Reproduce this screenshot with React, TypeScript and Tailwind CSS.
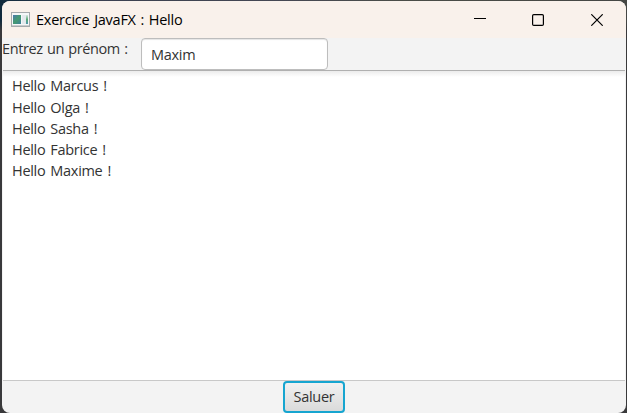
const greetings = ['Marcus', 'Olga', 'Sasha', 'Fabrice', 'Maxime'];

function AppIcon() {
  return (
    <svg width="19" height="15" viewBox="0 0 19 15" className="shrink-0" shapeRendering="crispEdges">
      <defs>
        <linearGradient id="pane" x1="0" y1="0" x2="1" y2="1">
          <stop offset="0" stopColor="#4a78ae" />
          <stop offset="0.5" stopColor="#459a70" />
          <stop offset="1" stopColor="#3f7f9c" />
        </linearGradient>
        <linearGradient id="side" x1="0" y1="0" x2="0" y2="1">
          <stop offset="0" stopColor="#d5e5df" />
          <stop offset="0.5" stopColor="#5cab78" />
          <stop offset="1" stopColor="#5098ad" />
        </linearGradient>
      </defs>
      <rect x="0.5" y="0.5" width="18" height="14" fill="#f5f7f8" stroke="#a5a9ac" />
      <rect x="2" y="3" width="8" height="9" fill="url(#pane)" />
      <rect x="11" y="3" width="4" height="9" fill="#e4e9ed" />
      <rect x="15" y="3" width="2" height="9" fill="url(#side)" />
      <rect x="1" y="13" width="17" height="1" fill="#c9cccd" />
    </svg>
  );
}

export default function App() {
  return (
    <div className="h-[413px] w-[627px] bg-[linear-gradient(90deg,#102a3d_0,#3a4050_100px,#454854_280px,#4b4d48_400px,#454744_627px)] font-['Open_Sans','Noto_Sans',sans-serif] text-[14.5px] text-[#333333]">
      <div className="h-full bg-[linear-gradient(#0000_20px,#39393b_30px)] pt-px pr-px pl-[2px]">
        <div className="flex h-[412px] flex-col overflow-hidden rounded-[8px] bg-[#f3f3f3]">
          <header className="flex h-[37px] shrink-0 items-center bg-[#f9f1eb] pl-[9px] text-black">
            <AppIcon />
            <h1 className="ml-[6px] text-[14.5px] leading-5 tracking-[-0.25px] [word-spacing:1.2px] whitespace-nowrap">Exercice JavaFX : Hello</h1>
            <div className="mr-[23px] ml-auto flex items-center">
              <button aria-label="Réduire" className="mr-[46px]">
                <svg width="12" height="12" viewBox="0 0 12 12" stroke="#000"><path d="M0 4.5H12" /></svg>
              </button>
              <button aria-label="Agrandir" className="mr-[47px]">
                <svg width="12" height="12" viewBox="0 0 12 12" fill="none" stroke="#000" strokeWidth="1.2"><rect x="0.6" y="0.6" width="10.8" height="10.8" rx="1.2" /></svg>
              </button>
              <button aria-label="Fermer">
                <svg width="12" height="12" viewBox="0 0 12 12" stroke="#000" strokeWidth="1.2"><path d="M.3.3l11.4 11.4M11.7.3L.3 11.7" /></svg>
              </button>
            </div>
          </header>
          <div className="flex h-8 shrink-0 items-start">
            <label htmlFor="name" className="w-[139px] pt-px leading-5 tracking-[-0.4px] [word-spacing:1px] whitespace-nowrap">Entrez un prénom :</label>
            <input
              id="name"
              defaultValue="Maxim"
              className="h-8 w-[187px] rounded-[4px] border border-[#bdbdbd] bg-white px-[9px] tracking-[-0.3px] shadow-[inset_0_1px_1px_#e5e5e5] outline-none"
            />
          </div>
          <main className="mx-px h-[311px] shrink-0 border-t border-b border-t-[#b0b0b0] border-b-[#c8c8c8] bg-[linear-gradient(#ececec,#fff_6px)] pt-[4.4px] pl-[9px]">
            {greetings.map((name) => (
              <p key={name} className="h-[21.2px] leading-[21.2px] tracking-[-0.3px] [word-spacing:1.5px]">Hello {name} !</p>
            ))}
          </main>
          <footer className="flex flex-1 justify-center">
            <button className="h-8 w-[62px] rounded-[4px] border-2 border-[#16a5d0] bg-[linear-gradient(#f1f1f1,#dadada)] tracking-[-0.3px]">Saluer</button>
          </footer>
        </div>
      </div>
    </div>
  );
}
